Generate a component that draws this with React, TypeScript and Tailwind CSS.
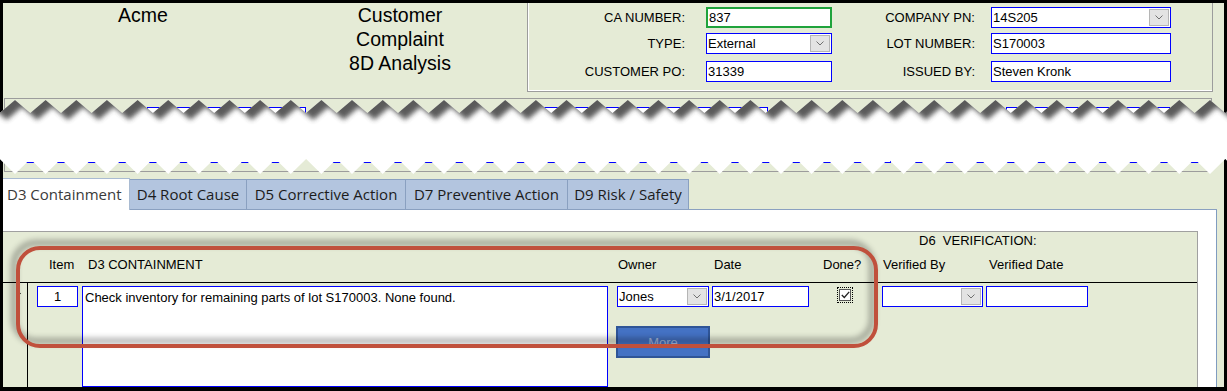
import React from "react";

const P = 30.64;
const X0 = 15;

// torn-paper band between the header and the tab control
function tearPaths() {
  const top: string[] = [];
  const bottom: string[] = [];
  for (let k = -1; k <= 41; k++) {
    const x = X0 + k * P;
    top.push(`${x.toFixed(1)},100`, `${(x + P / 2).toFixed(1)},113`);
  }
  for (let k = 41; k >= -1; k--) {
    const x = X0 + k * P;
    bottom.push(`${(x + P / 2).toFixed(1)},159`, `${x.toFixed(1)},174`);
  }
  const gap = `M${top.join(" L")} L${bottom.join(" L")} Z`;
  const piece = `M-60,40 L${top.join(" L")} L1300,40 Z`;
  return { gap, piece };
}

function Tear() {
  const { gap, piece } = tearPaths();
  return (
    <svg className="absolute inset-0 pointer-events-none" width="1227" height="391" viewBox="0 0 1227 391">
      <defs>
        <clipPath id="gapClip">
          <path d={gap} />
        </clipPath>
        <filter id="blur" x="-10%" y="-50%" width="120%" height="200%">
          <feGaussianBlur stdDeviation="2.4" />
        </filter>
      </defs>
      <path d={gap} fill="#ffffff" />
      <g clipPath="url(#gapClip)">
        <path d={piece} transform="translate(7,7)" fill="#4a4a4a" opacity="0.9" filter="url(#blur)" />
      </g>
    </svg>
  );
}

function Chevron() {
  return (
    <svg width="8" height="5" viewBox="0 0 8 5">
      <path d="M0.5 0.5 L4 4 L7.5 0.5" fill="none" stroke="#707070" strokeWidth="1" />
    </svg>
  );
}

function DropBtn() {
  return (
    <div className="w-[20px] h-[17px] mr-[1px] bg-[#E3E3E3] border border-[#B5B5B5] flex items-center justify-center shrink-0">
      <Chevron />
    </div>
  );
}

function Box({ className, value, combo, green, center }: { className: string; value?: string; combo?: boolean; green?: boolean; center?: boolean }) {
  return (
    <div
      className={`${className} h-[21px] bg-white flex items-center text-[13px] leading-[15px] text-black shrink-0 ${
        green ? "border-2 border-[#1FA33C]" : "border border-[#0000FF]"
      }`}
    >
      <span className={`flex-1 ${center ? "text-center" : "pl-[1px]"} whitespace-nowrap overflow-hidden`}>{value}</span>
      {combo && <DropBtn />}
    </div>
  );
}

function HeaderRow({ l1, f1, l2, f2, className }: { l1: string; f1: React.ReactNode; l2: string; f2: React.ReactNode; className: string }) {
  return (
    <div className={`flex items-center ${className}`}>
      <div className="w-[157px] text-right text-[13px]">{l1}</div>
      <div className="ml-[21px]">{f1}</div>
      <div className="w-[143px] text-right text-[13px]">{l2}</div>
      <div className="ml-[16px]">{f2}</div>
    </div>
  );
}

const tabs = [
  { label: "D4 Root Cause", w: "w-[117px]" },
  { label: "D5 Corrective Action", w: "w-[159px]" },
  { label: "D7 Preventive Action", w: "w-[162px]" },
  { label: "D9 Risk / Safety", w: "w-[121px]" },
];

export default function App() {
  return (
    <div className="relative w-[1227px] h-[391px] bg-black pt-[3px] pl-[3px] pr-[3px] pb-[4px] overflow-hidden font-['Liberation_Sans',Arial,sans-serif] text-black">
      <div className="h-full bg-[#E5EBD6] flex flex-col">
        {/* header */}
        <div className="h-[95px] flex shrink-0">
          <div className="w-[280px] text-center text-[19.5px] leading-[24px]">Acme</div>
          <div className="w-[234px] text-center text-[19.5px] leading-[24px]">
            <div>Customer</div>
            <div>Complaint</div>
            <div>8D Analysis</div>
          </div>
          <div className="ml-[10px] w-[686px] h-[89px] border-l border-r border-b border-[#9C9C9C] shadow-[inset_1px_-1px_0_#ffffff]">
            <HeaderRow
              className="mt-[4px]"
              l1="CA NUMBER:"
              f1={<Box className="w-[126px]" value="837" green />}
              l2="COMPANY PN:"
              f2={<Box className="w-[180px]" value="14S205" combo />}
            />
            <HeaderRow
              className="mt-[5px]"
              l1="TYPE:"
              f1={<Box className="w-[126px]" value="External" combo />}
              l2="LOT NUMBER:"
              f2={<Box className="w-[180px]" value="S170003" />}
            />
            <HeaderRow
              className="mt-[7px]"
              l1="CUSTOMER PO:"
              f1={<Box className="w-[126px]" value="31339" />}
              l2="ISSUED BY:"
              f2={<Box className="w-[180px]" value="Steven Kronk" />}
            />
          </div>
        </div>

        {/* section hidden behind the tear */}
        <div className="ml-[1px] w-[1208px] h-[74px] shrink-0 border border-[#9C9C9C] text-[13px]">
          <div className="flex items-center mt-[8px]">
            <div className="ml-[50px] w-[92px] whitespace-nowrap">TOTAL TITLE</div>
            <Box className="w-[159px]" />
            <div className="ml-[20px] w-[218px] text-right">DESCRIPTION:</div>
            <Box className="w-[224px]" />
            <div className="ml-[20px] w-[218px] text-right">CONTACT:</div>
            <Box className="w-[164px]" />
          </div>
          <div className="flex mt-[14px] gap-[10px] pl-[16px]">
            <Box className="w-[280px]" />
            <Box className="w-[280px]" />
            <Box className="w-[290px]" />
            <Box className="w-[300px]" />
          </div>
        </div>

        {/* tabs */}
        <div className="mt-[6px] w-[1214px] h-[32px] flex items-end shrink-0 font-['Open_Sans',sans-serif] text-[15px]">
          <div className="w-[127px] h-[32px] bg-white border-t border-r border-[#A9BBD2] text-[#3a3a3a] pl-[4px] flex items-center">
            D3 Containment
          </div>
          {tabs.map((t) => (
            <div
              key={t.label}
              className={`${t.w} h-[31px] bg-[#B3C5DF] border-t border-r border-b border-[#8AA0C0] text-[#1c1c1c] flex items-center justify-center whitespace-nowrap`}
            >
              {t.label}
            </div>
          ))}
          <div className="flex-1 h-[31px] border-b border-[#8AA0C0]" />
        </div>

        {/* tab page */}
        <div className="w-[1214px] flex-1 bg-white border-r border-[#7F9CC0] pt-[21px] flex flex-col min-h-0">
          <div className="w-[1195px] flex-1 bg-[#E5EBD6] border-t border-r border-[#A0A0A0] flex flex-col text-[13px] leading-[15px]">
            <div className="h-[25px] pl-[916px] pt-[1px] whitespace-pre">D6  VERIFICATION:</div>
            <div className="h-[25px] flex whitespace-nowrap">
              <span className="ml-[46px] w-[39px]">Item</span>
              <span className="w-[530px]">D3 CONTAINMENT</span>
              <span className="w-[96px]">Owner</span>
              <span className="w-[109px]">Date</span>
              <span className="w-[60px]">Done?</span>
              <span className="w-[106px]">Verified By</span>
              <span>Verified Date</span>
            </div>
            <div className="h-px bg-black shrink-0" />
            <div className="flex flex-1 min-h-0">
              <div className="w-[25px] border-r border-black pt-[7px] pl-[13px] shrink-0">
                <svg width="5" height="7" viewBox="0 0 5 7">
                  <path d="M0 0 L5 3.5 L0 7 Z" fill="#000" />
                </svg>
              </div>
              <Box className="ml-[9px] mt-[3px] w-[41px]" value="1" center />
              <div className="ml-[4px] mt-[3px] w-[526px] h-[101px] shrink-0 bg-white border border-[#0000FF] pl-[2px] pt-[3px] whitespace-nowrap">
                Check inventory for remaining parts of lot S170003. None found.
              </div>
              <div className="ml-[9px] mt-[3px] w-[92px] shrink-0 flex flex-col">
                <Box className="w-[92px]" value="Jones" combo />
                <div className="mt-[19px] -ml-px w-[94px] h-[32px] bg-[#4472C4] border-2 border-[#2F5597] text-[#A7B9DD] flex items-center justify-center">
                  More
                </div>
              </div>
              <Box className="ml-[3px] mt-[3px] w-[97px]" value="3/1/2017" />
              <div className="ml-[28px] mt-[4px] w-[16px] h-[16px] border border-dotted border-black p-[1px] shrink-0">
                <div className="w-full h-full bg-white border border-[#555] flex items-center justify-center">
                  <svg width="9" height="8" viewBox="0 0 9 8">
                    <path d="M0.8 4 L3.3 6.5 L8.2 0.8" fill="none" stroke="#222" strokeWidth="1.3" />
                  </svg>
                </div>
              </div>
              <Box className="ml-[29px] mt-[3px] w-[101px]" combo />
              <Box className="ml-[3px] mt-[3px] w-[102px]" />
            </div>
          </div>
        </div>
      </div>

      <Tear />

      {/* annotation */}
      <div className="absolute left-[16px] top-[246px] w-[862px] h-[102px] border-[4px] border-[#C0503C] rounded-[24px] [filter:drop-shadow(-4px_-5px_3px_rgba(0,0,0,0.45))] pointer-events-none" />
    </div>
  );
}
